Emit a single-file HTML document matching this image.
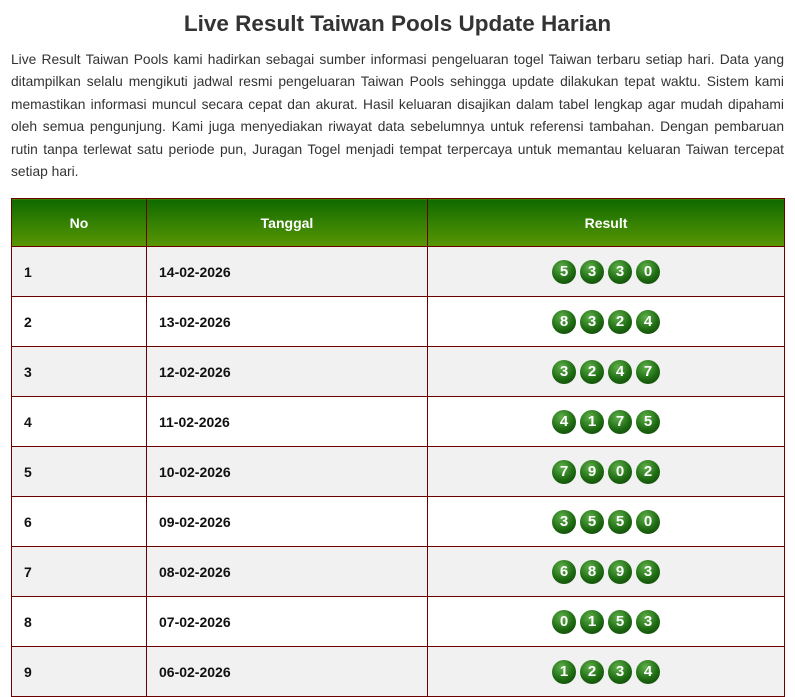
<!DOCTYPE html>
<html><head><meta charset="utf-8"><style>
body{margin:0;background:#fff;font-family:"Liberation Sans",sans-serif;color:#222;width:795px;height:649px;overflow:hidden}
h1{margin:0;padding-top:9px;text-align:center;font-size:22.5px;line-height:30px;color:#333;font-weight:bold}
p{margin:10px 11px 0 11px;font-size:13.8px;line-height:22.4px;text-align:justify;color:#333}
table{position:absolute;left:11px;top:198px;width:774px;border-collapse:collapse}
td,th{border:1px solid #6b0000;height:49px;font-size:14px;padding:0 12px}
th{background:linear-gradient(#0f6a00,#5a9704);color:#fff;text-align:center;height:47px}
td{font-weight:bold;color:#111}
tr:nth-child(even) td{background:#f1f1f1}
td.r{text-align:center;padding:0}
.b{display:inline-block;width:24px;height:24px;border-radius:50%;margin:0 2px;color:#fff;font-weight:bold;font-size:15px;line-height:24px;text-align:center;vertical-align:middle;background:radial-gradient(circle at 40% 30%,#5fb04a,#1e6b12 55%,#0b3a06)}
</style></head><body>
<h1>Live Result Taiwan Pools Update Harian</h1>
<p>Live Result Taiwan Pools kami hadirkan sebagai sumber informasi pengeluaran togel Taiwan terbaru setiap hari. Data yang ditampilkan selalu mengikuti jadwal resmi pengeluaran Taiwan Pools sehingga update dilakukan tepat waktu. Sistem kami memastikan informasi muncul secara cepat dan akurat. Hasil keluaran disajikan dalam tabel lengkap agar mudah dipahami oleh semua pengunjung. Kami juga menyediakan riwayat data sebelumnya untuk referensi tambahan. Dengan pembaruan rutin tanpa terlewat satu periode pun, Juragan Togel menjadi tempat terpercaya untuk memantau keluaran Taiwan tercepat setiap hari.</p>
<table>
<tr><th style="width:110px">No</th><th style="width:256px">Tanggal</th><th>Result</th></tr>
<tr><td>1</td><td>14-02-2026</td><td class="r"><span class="b">5</span><span class="b">3</span><span class="b">3</span><span class="b">0</span></td></tr>
<tr><td>2</td><td>13-02-2026</td><td class="r"><span class="b">8</span><span class="b">3</span><span class="b">2</span><span class="b">4</span></td></tr>
<tr><td>3</td><td>12-02-2026</td><td class="r"><span class="b">3</span><span class="b">2</span><span class="b">4</span><span class="b">7</span></td></tr>
<tr><td>4</td><td>11-02-2026</td><td class="r"><span class="b">4</span><span class="b">1</span><span class="b">7</span><span class="b">5</span></td></tr>
<tr><td>5</td><td>10-02-2026</td><td class="r"><span class="b">7</span><span class="b">9</span><span class="b">0</span><span class="b">2</span></td></tr>
<tr><td>6</td><td>09-02-2026</td><td class="r"><span class="b">3</span><span class="b">5</span><span class="b">5</span><span class="b">0</span></td></tr>
<tr><td>7</td><td>08-02-2026</td><td class="r"><span class="b">6</span><span class="b">8</span><span class="b">9</span><span class="b">3</span></td></tr>
<tr><td>8</td><td>07-02-2026</td><td class="r"><span class="b">0</span><span class="b">1</span><span class="b">5</span><span class="b">3</span></td></tr>
<tr><td>9</td><td>06-02-2026</td><td class="r"><span class="b">1</span><span class="b">2</span><span class="b">3</span><span class="b">4</span></td></tr>
</table>
</body></html>
